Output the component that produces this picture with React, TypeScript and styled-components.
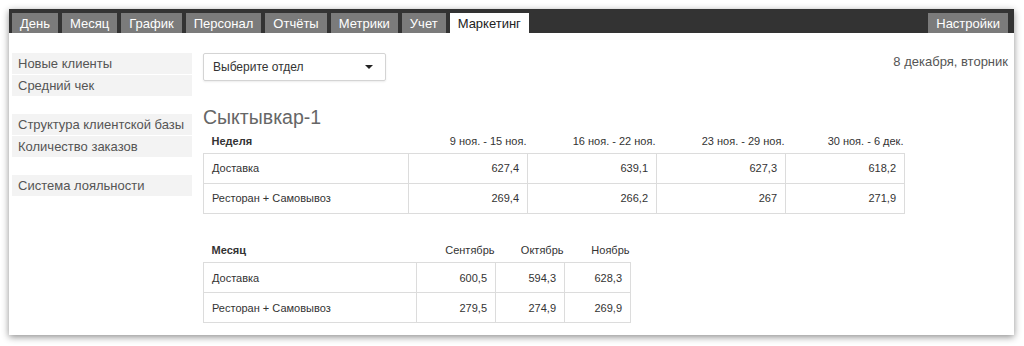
import React from "react";
import styled, { createGlobalStyle } from "styled-components";

const GlobalStyle = createGlobalStyle`
  html, body { margin: 0; padding: 0; background: #ffffff; }
  body { font-family: "Liberation Sans", Arial, Helvetica, sans-serif; }
  * { box-sizing: border-box; }
`;

const Window = styled.div`
  margin: 9px 10px 11px 9px;
  width: 1005px;
  height: 326px;
  background: #ffffff;
  box-shadow: 0 2px 7px rgba(0, 0, 0, 0.45);
  display: flex;
  flex-direction: column;
`;

const NavBar = styled.nav`
  background: #333333;
  height: 24px;
  padding: 4px 6px 0 3px;
  display: flex;
  align-items: flex-end;
  gap: 4px;
`;

const Tab = styled.div<{ $active?: boolean }>`
  height: 20px;
  padding: 0 8px;
  display: flex;
  align-items: center;
  font-size: 13px;
  color: ${(p) => (p.$active ? "#222222" : "#ffffff")};
  background: ${(p) => (p.$active ? "#ffffff" : "#7b7b7b")};
  white-space: nowrap;
`;

const Spacer = styled.div`
  flex: 1;
`;

const Body = styled.div`
  display: flex;
  padding: 20px 6px 0 3px;
  gap: 11px;
`;

const Sidebar = styled.aside`
  width: 180px;
  display: flex;
  flex-direction: column;
  gap: 18px;
`;

const MenuGroup = styled.div`
  display: flex;
  flex-direction: column;
  gap: 1px;
`;

const MenuItem = styled.div`
  height: 21px;
  background: #f3f3f3;
  color: #555555;
  font-size: 13px;
  padding: 0 6px;
  display: flex;
  align-items: center;
  white-space: nowrap;
`;

const Main = styled.main`
  flex: 1;
  display: flex;
  flex-direction: column;
`;

const TopRow = styled.div`
  display: flex;
  justify-content: space-between;
  align-items: flex-start;
`;

const Select = styled.div`
  width: 183px;
  height: 28px;
  border: 1px solid #d4d4d4;
  border-radius: 2px;
  box-shadow: 0 1px 2px rgba(0, 0, 0, 0.08);
  display: flex;
  align-items: center;
  justify-content: space-between;
  padding: 0 12px 0 9px;
  font-size: 12px;
  color: #333333;
`;

const Caret = styled.span`
  width: 0;
  height: 0;
  border-left: 4px solid transparent;
  border-right: 4px solid transparent;
  border-top: 4px solid #222222;
`;

const DateText = styled.div`
  font-size: 13px;
  color: #555555;
  margin-top: 1px;
`;

const Title = styled.h2`
  margin: 24px 0 0 0;
  font-size: 19.5px;
  line-height: 24px;
  font-weight: normal;
  color: #666666;
`;

const Table = styled.table<{ $mt?: number }>`
  border-collapse: collapse;
  table-layout: fixed;
  margin-top: ${(p) => p.$mt ?? 0}px;
  font-size: 11px;
  color: #333333;
`;

const HeadCell = styled.th<{ $first?: boolean }>`
  height: 24px;
  padding: ${(p) => (p.$first ? "0 0 0 8px" : "0 1px 0 0")};
  text-align: ${(p) => (p.$first ? "left" : "right")};
  font-weight: ${(p) => (p.$first ? "bold" : "normal")};
  color: #333333;
  white-space: nowrap;
  vertical-align: middle;
`;

const Cell = styled.td<{ $first?: boolean }>`
  height: 30px;
  border: 1px solid #dcdcdc;
  padding: ${(p) => (p.$first ? "0 0 0 8px" : "0 8px 0 0")};
  text-align: ${(p) => (p.$first ? "left" : "right")};
  white-space: nowrap;
  vertical-align: middle;
`;

type TableData = {
  label: string;
  widths: number[];
  headers: string[];
  rows: { name: string; values: string[] }[];
};

const weekly: TableData = {
  label: "Неделя",
  widths: [205, 119, 129, 129, 119],
  headers: ["9 ноя. - 15 ноя.", "16 ноя. - 22 ноя.", "23 ноя. - 29 ноя.", "30 ноя. - 6 дек."],
  rows: [
    { name: "Доставка", values: ["627,4", "639,1", "627,3", "618,2"] },
    { name: "Ресторан + Самовывоз", values: ["269,4", "266,2", "267", "271,9"] },
  ],
};

const monthly: TableData = {
  label: "Месяц",
  widths: [213, 79, 69, 66],
  headers: ["Сентябрь", "Октябрь", "Ноябрь"],
  rows: [
    { name: "Доставка", values: ["600,5", "594,3", "628,3"] },
    { name: "Ресторан + Самовывоз", values: ["279,5", "274,9", "269,9"] },
  ],
};

function DataTable({ data, mt }: { data: TableData; mt?: number }) {
  const total = data.widths.reduce((a, b) => a + b, 0);
  return (
    <Table $mt={mt} style={{ width: total }}>
      <colgroup>
        {data.widths.map((w, i) => (
          <col key={i} style={{ width: w }} />
        ))}
      </colgroup>
      <thead>
        <tr>
          <HeadCell $first>{data.label}</HeadCell>
          {data.headers.map((h) => (
            <HeadCell key={h}>{h}</HeadCell>
          ))}
        </tr>
      </thead>
      <tbody>
        {data.rows.map((r) => (
          <tr key={r.name}>
            <Cell $first>{r.name}</Cell>
            {r.values.map((v, i) => (
              <Cell key={i}>{v}</Cell>
            ))}
          </tr>
        ))}
      </tbody>
    </Table>
  );
}

const tabs = ["День", "Месяц", "График", "Персонал", "Отчёты", "Метрики", "Учет", "Маркетинг"];

export default function App() {
  return (
    <>
      <GlobalStyle />
      <Window>
        <NavBar>
          {tabs.map((t) => (
            <Tab key={t} $active={t === "Маркетинг"}>
              {t}
            </Tab>
          ))}
          <Spacer />
          <Tab>Настройки</Tab>
        </NavBar>
        <Body>
          <Sidebar>
            <MenuGroup>
              <MenuItem>Новые клиенты</MenuItem>
              <MenuItem>Средний чек</MenuItem>
            </MenuGroup>
            <MenuGroup>
              <MenuItem>Структура клиентской базы</MenuItem>
              <MenuItem>Количество заказов</MenuItem>
            </MenuGroup>
            <MenuGroup>
              <MenuItem>Система лояльности</MenuItem>
            </MenuGroup>
          </Sidebar>
          <Main>
            <TopRow>
              <Select>
                <span>Выберите отдел</span>
                <Caret />
              </Select>
              <DateText>8 декабря, вторник</DateText>
            </TopRow>
            <Title>Сыктывкар-1</Title>
            <DataTable data={weekly} />
            <DataTable data={monthly} mt={25} />
          </Main>
        </Body>
      </Window>
    </>
  );
}
